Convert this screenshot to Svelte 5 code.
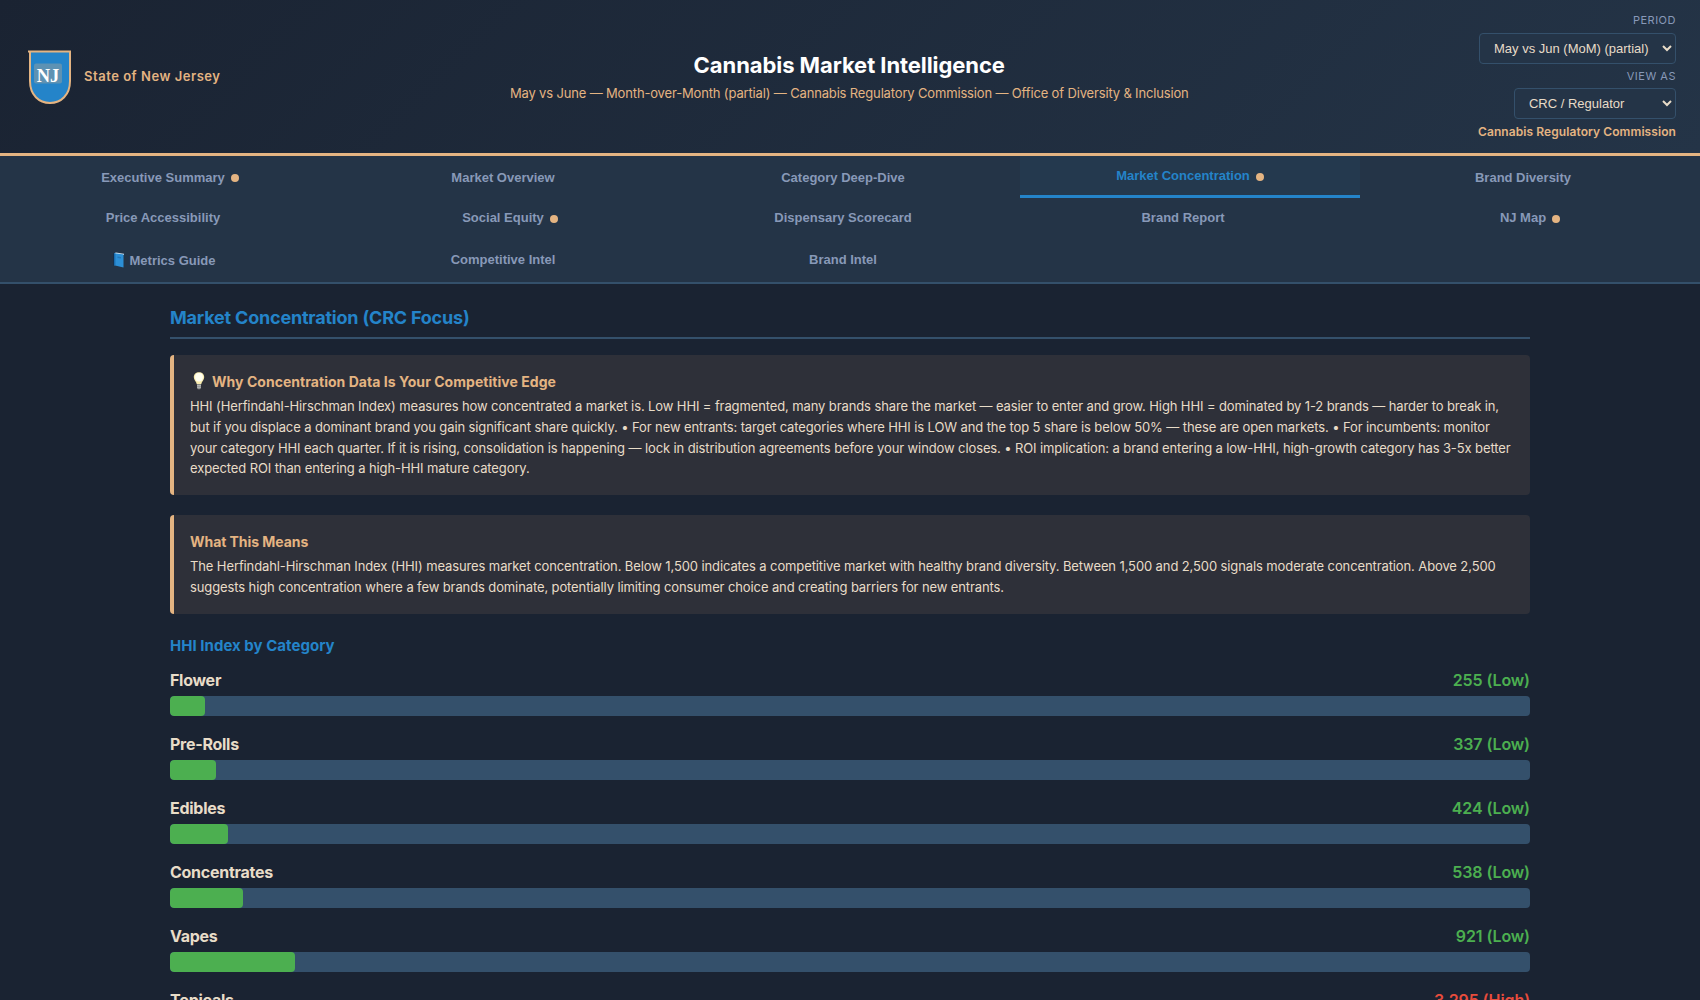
<script lang="ts">
	interface Tab {
		label: string;
		dot?: boolean;
		icon?: boolean;
	}

	interface Category {
		name: string;
		hhi: number;
	}

	const tabs: Tab[] = [
		{ label: 'Executive Summary', dot: true },
		{ label: 'Market Overview' },
		{ label: 'Category Deep-Dive' },
		{ label: 'Market Concentration', dot: true },
		{ label: 'Brand Diversity' },
		{ label: 'Price Accessibility' },
		{ label: 'Social Equity', dot: true },
		{ label: 'Dispensary Scorecard' },
		{ label: 'Brand Report' },
		{ label: 'NJ Map', dot: true },
		{ label: 'Metrics Guide', icon: true },
		{ label: 'Competitive Intel' },
		{ label: 'Brand Intel' }
	];

	const categories: Category[] = [
		{ name: 'Flower', hhi: 255 },
		{ name: 'Pre-Rolls', hhi: 337 },
		{ name: 'Edibles', hhi: 424 },
		{ name: 'Concentrates', hhi: 538 },
		{ name: 'Vapes', hhi: 921 },
		{ name: 'Topicals', hhi: 3295 }
	];

	let active = $state('Market Concentration');

	function level(hhi: number) {
		if (hhi < 1500) return 'Low';
		if (hhi <= 2500) return 'Moderate';
		return 'High';
	}
</script>

<div class="page">
	<header class="header">
		<div class="brand">
			<svg class="shield" width="48" height="56" viewBox="0 0 48 56" aria-hidden="true">
				<path
					d="M4 2.5H46V32C46 46 37 54 26 54S6 46 6 32V2.5"
					fill="#2484c9"
					stroke="#e4b482"
					stroke-width="2"
				/>
				<rect x="10" y="14.5" width="28" height="20" rx="2" fill="#e4b482" opacity="0.3" />
				<text x="24" y="32.5" text-anchor="middle">NJ</text>
			</svg>
			<span class="state">State of New Jersey</span>
		</div>

		<div class="titles">
			<h1>Cannabis Market Intelligence</h1>
			<p>May vs June — Month-over-Month (partial) — Cannabis Regulatory Commission — Office of Diversity &amp; Inclusion</p>
		</div>

		<div class="controls">
			<label for="period">Period</label>
			<select id="period" class="period">
				<option>May vs Jun (MoM) (partial)</option>
			</select>
			<label for="role">View as</label>
			<select id="role" class="role">
				<option>CRC / Regulator</option>
			</select>
			<div class="org">Cannabis Regulatory Commission</div>
		</div>
	</header>

	<nav class="tabs">
		{#each tabs as tab (tab.label)}
			<button class="tab" class:active={active === tab.label} onclick={() => (active = tab.label)}>
				{#if tab.icon}
					<svg class="book" width="13" height="16" viewBox="0 0 13 16" aria-hidden="true">
						<path d="M1 1.5 2.5 1V13L1 13.5Z" fill="#15304d" />
						<path d="M2 1.2 4 .5 12 1.8V3L4 2.5Z" fill="#c9dcea" />
						<path d="M2 1.3 11.5 2.6V15.5L2 13.2Z" fill="#2c8fd6" />
						<path d="M2 1.3 3.4 1.5V13.5L2 13.2Z" fill="#1b6cae" />
						<path d="M5.5 4.5 9 5V6.5L5.5 6Z" fill="#2377b8" />
					</svg>
				{/if}
				<span class:with-icon={tab.icon}>{tab.label}</span>
				<i class="dot" class:on={tab.dot}></i>
			</button>
		{/each}
	</nav>

	<main class="content">
		<h2>Market Concentration (CRC Focus)</h2>

		<section class="callout">
			<h4 class="edge">
				<svg class="bulb" width="17" height="18" viewBox="0 0 17 18" aria-hidden="true">
					<path
						d="M9 .3C6 .3 3.8 2.3 3.8 5.2 3.800 8 6.200 9.200 6.800 12.300H11.200C11.800 9.200 14.200 8 14.200 5.200 14.200 2.300 12 .3 9 .3Z"
						fill="#f8ecb0"
					/>
					<ellipse cx="9" cy="5.300" rx="3.900" ry="4.200" fill="#fffef0" />
					<path d="M7 12.300H11V16L10.100 17.300H7.900L7 16Z" fill="#8d8f8f" />
					<path d="M7 13.600H11M7.100 15.300H10.900" stroke="#c6c8c6" stroke-width=".7" />
				</svg>
				<span>Why Concentration Data Is Your Competitive Edge</span>
			</h4>
			<p>
				HHI (Herfindahl-Hirschman Index) measures how concentrated a market is. Low HHI = fragmented, many brands share the market — easier to enter and grow. High HHI = dominated by 1-2 brands — harder to break in,<br />
				but if you displace a dominant brand you gain significant share quickly. • For new entrants: target categories where HHI is LOW and the top 5 share is below 50% — these are open markets. • For incumbents: monitor<br />
				your category HHI each quarter. If it is rising, consolidation is happening — lock in distribution agreements before your window closes. • ROI implication: a brand entering a low-HHI, high-growth category has 3-5x better<br />
				expected ROI than entering a high-HHI mature category.
			</p>
		</section>

		<section class="callout">
			<h4>What This Means</h4>
			<p>
				The Herfindahl-Hirschman Index (HHI) measures market concentration. Below 1,500 indicates a competitive market with healthy brand diversity. Between 1,500 and 2,500 signals moderate concentration. Above 2,500<br />
				suggests high concentration where a few brands dominate, potentially limiting consumer choice and creating barriers for new entrants.
			</p>
		</section>

		<h3>HHI Index by Category</h3>
		{#each categories as cat (cat.name)}
			<div class="row" class:high={level(cat.hhi) === 'High'}>
				<div class="row-head">
					<span class="name">{cat.name}</span>
					<span class="value">{cat.hhi.toLocaleString('en-US')} ({level(cat.hhi)})</span>
				</div>
				<div class="track">
					<div class="fill" style="width: {cat.hhi / 100}%"></div>
				</div>
			</div>
		{/each}
	</main>
</div>

<style>
	:global(body) {
		margin: 0;
		background: #1a2332;
	}

	.page {
		height: 100vh;
		overflow: hidden;
		font-family: Inter, 'Liberation Sans', sans-serif;
		line-height: 1.5;
		background: #1a2332;
		color: #e8dcc8;
	}

	h1,
	h2,
	h3,
	h4,
	p {
		margin: 0;
	}

	.header {
		display: flex;
		align-items: center;
		justify-content: space-between;
		box-sizing: border-box;
		height: 156px;
		padding: 12px 24px;
		background: linear-gradient(135deg, #1a2332 0%, #243447 100%);
		border-bottom: 3px solid #e4b482;
	}

	.brand {
		display: flex;
		align-items: center;
		gap: 12px;
	}

	.shield text {
		font: bold 18.5px 'Liberation Serif', serif;
		fill: #fff;
	}

	.state {
		font-size: 13px;
		font-weight: 600;
		letter-spacing: 0.53px;
		color: #e4b482;
	}

	.titles {
		text-align: center;
		white-space: nowrap;
	}

	.titles h1 {
		margin-bottom: 2px;
		font-size: 22px;
		font-weight: 700;
		letter-spacing: -0.07px;
		color: #fff;
	}

	.titles p {
		font-size: 13px;
		letter-spacing: -0.155px;
		color: #e4b482;
	}

	.controls {
		display: flex;
		flex-direction: column;
		align-items: flex-end;
		gap: 4px;
	}

	.controls label {
		font-size: 11px;
		letter-spacing: 0.5px;
		text-transform: uppercase;
		color: #8899b8;
	}

	.controls select {
		height: 31px;
		padding: 6px 10px;
		font: 13px 'Liberation Sans', sans-serif;
		color: #e8dcc8;
		background: #243447;
		border: 1px solid #34506b;
		border-radius: 4px;
	}

	.controls .period {
		width: 197px;
	}

	.controls .role {
		width: 162px;
	}

	.org {
		font-size: 12px;
		font-weight: 600;
		letter-spacing: 0.08px;
		color: #e4b482;
	}

	.tabs {
		display: grid;
		grid-template-columns: repeat(5, 1fr);
		grid-template-rows: 42px 39px 45px;
		background: #243447;
		border-bottom: 2px solid #34506b;
	}

	.tab {
		display: flex;
		align-items: center;
		justify-content: center;
		padding: 0;
		font: bold 13px 'Liberation Sans', sans-serif;
		color: #8899b8;
		background: none;
		border: 0;
		cursor: pointer;
	}

	.tab.active {
		color: #2484c9;
		background: #24394e;
		border-bottom: 3px solid #2484c9;
	}

	.dot {
		width: 8px;
		height: 8px;
		margin: 2px 0 0 6px;
		border-radius: 50%;
	}

	.dot.on {
		background: #e4b482;
	}

	.book {
		margin: 0 5px 0 1px;
	}

	.with-icon {
		padding-top: 2px;
	}

	.content {
		width: 80%;
		margin: 0 auto;
		padding-top: 20px;
	}

	h2 {
		padding-bottom: 6px;
		margin-bottom: 16px;
		font-size: 18px;
		font-weight: 700;
		letter-spacing: -0.2px;
		color: #2484c9;
		border-bottom: 2px solid #34506b;
	}

	.callout {
		padding: 16px;
		margin-bottom: 20px;
		background: #2e3039;
		border-left: 4px solid #e4b482;
		border-radius: 4px;
	}

	.callout h4 {
		display: flex;
		align-items: center;
		gap: 5px;
		margin-bottom: 4px;
		font-size: 14px;
		font-weight: 700;
		line-height: 21px;
		letter-spacing: -0.05px;
		color: #e4b482;
	}

	.callout .edge {
		letter-spacing: 0.04px;
	}

	.callout p {
		font-size: 13px;
		line-height: 1.6;
		letter-spacing: -0.11px;
		white-space: nowrap;
	}

	.bulb {
		margin-bottom: 1px;
	}

	h3 {
		padding-top: 1px;
		margin-bottom: 11px;
		font-size: 15px;
		font-weight: 700;
		letter-spacing: 0.03px;
		color: #2484c9;
	}

	.row {
		margin-bottom: 16px;
	}

	.row-head {
		display: flex;
		justify-content: space-between;
		margin-bottom: 4px;
		font-size: 16px;
		font-weight: 600;
		letter-spacing: -0.1px;
	}

	.name {
		font-weight: 700;
		letter-spacing: -0.27px;
	}

	.value {
		color: #4caf50;
	}

	.high .value {
		color: #e74c3c;
	}

	.track {
		height: 20px;
		background: #34506b;
		border-radius: 4px;
		overflow: hidden;
	}

	.fill {
		height: 100%;
		background: #4caf50;
		border-radius: 4px;
	}

	.high .fill {
		background: #e74c3c;
	}
</style>
